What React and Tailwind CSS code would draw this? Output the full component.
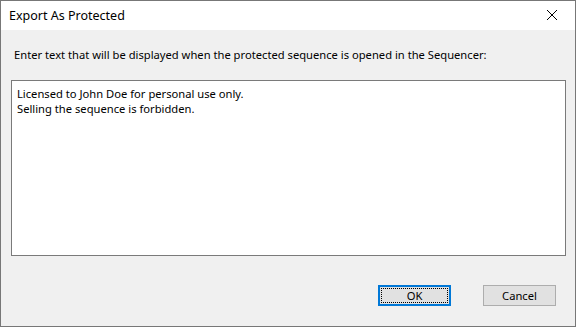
import React from 'react';

const font = { fontFamily: '"Segoe UI", "Noto Sans", "Liberation Sans", sans-serif' };

const App = () => {
  return (
    <div className="w-[576px] h-[327px] border border-[#777777] bg-[#f0f0f0] flex flex-col text-black text-[11.2px] overflow-hidden" style={font}>
      {/* Title bar */}
      <div className="h-[29px] bg-white flex items-center justify-between shrink-0">
        <span className="pl-2 text-[12.5px] leading-4">Export As Protected</span>
        <svg width="46" height="29" viewBox="0 0 46 29" className="shrink-0">
          <path d="M18 9 L28 19 M28 9 L18 19" stroke="#000" strokeWidth="1" fill="none" />
        </svg>
      </div>

      {/* Body */}
      <div className="flex-1 flex flex-col px-[10px]">
        <p className="pl-[3px] pt-[17px] leading-[15px]">
          Enter text that will be displayed when the protected sequence is opened in the Sequencer:
        </p>
        <div className="mt-[18px] h-[176px] w-[555px] bg-white border border-[#7a7a7a] px-[5px] pt-[5px] leading-[15px]">
          <div>Licensed to John Doe for personal use only.</div>
          <div>Selling the sequence is forbidden.</div>
        </div>

        <div className="flex justify-end gap-[32px] mt-[29px] pr-[9px]">
          <button className="w-[73px] h-[21px] bg-[#e1e1e1] border-2 border-[#0078d7] flex items-center justify-center p-[1px]">
            <span className="w-full h-full border border-dotted border-black flex items-center justify-center leading-none">OK</span>
          </button>
          <button className="w-[73px] h-[21px] bg-[#e1e1e1] border border-[#adadad] flex items-center justify-center leading-none">
            Cancel
          </button>
        </div>
      </div>
    </div>
  );
};

export default App;
